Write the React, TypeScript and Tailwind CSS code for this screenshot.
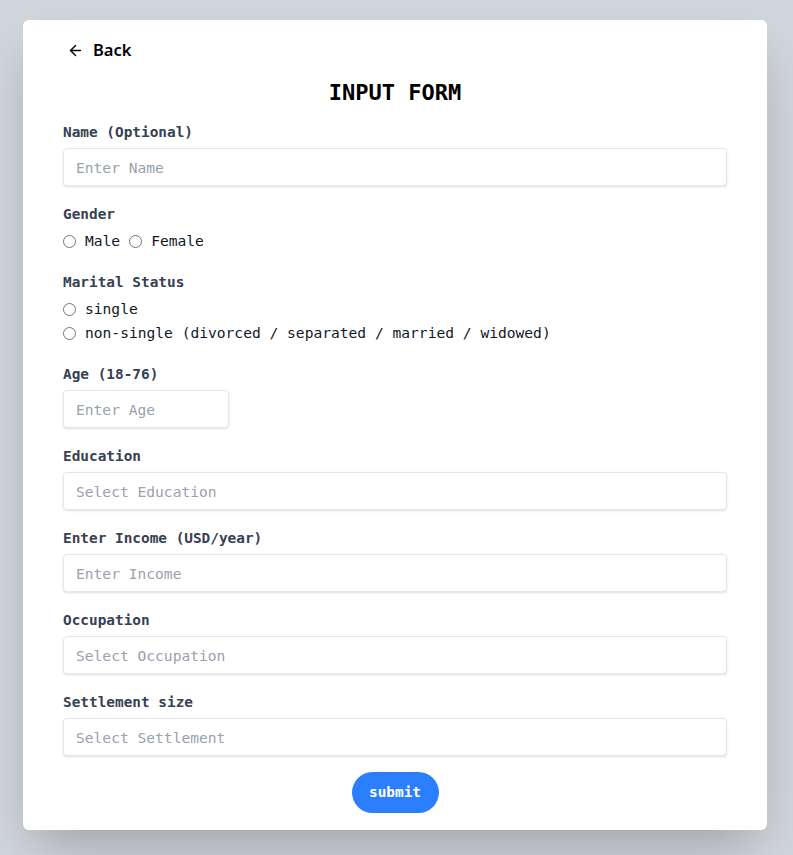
import { ArrowLeft } from 'lucide-react';

const mono = "font-['DejaVu_Sans_Mono',monospace]";

function Field({ label, placeholder, narrow }: { label: string; placeholder: string; narrow?: boolean }) {
  return (
    <div className="flex flex-col">
      <label className="mb-1.5 text-[14.4px] font-bold leading-5 text-gray-700">{label}</label>
      <input
        placeholder={placeholder}
        className={`h-[38px] rounded border border-gray-200 bg-white px-3 text-[14.6px] shadow-sm outline-none placeholder:text-gray-400 ${narrow ? 'w-[166px]' : 'w-full'}`}
      />
    </div>
  );
}

function Radio({ name, text }: { name: string; text: string }) {
  return (
    <label className="flex h-6 items-center text-[14.6px] text-gray-900">
      <input type="radio" name={name} className="m-0 mr-[9px] h-[13px] w-[13px]" />
      {text}
    </label>
  );
}

export default function App() {
  return (
    <div className={`min-h-[855px] bg-gray-300 pl-[23px] pr-[26px] pt-5 ${mono}`}>
      <div className="rounded-md bg-white px-10 pb-[17px] pt-5 shadow-2xl">
        <button className="flex h-5 items-center gap-[9px] pl-[4px] font-['Noto_Sans',sans-serif] text-[16.5px] font-semibold text-black">
          <ArrowLeft className="size-[17px]" strokeWidth={2} />
          Back
        </button>

        <h1 className="mt-[17px] text-center text-[22px] font-bold leading-8 text-black">INPUT FORM</h1>

        <div className="mt-[13px] flex flex-col gap-[18px]">
          <Field label="Name (Optional)" placeholder="Enter Name" />

          <div className="flex flex-col pb-px">
            <span className="mb-[5px] text-[14.4px] font-bold leading-5 text-gray-700">Gender</span>
            <div className="flex gap-[9px]">
              <Radio name="gender" text="Male" />
              <Radio name="gender" text="Female" />
            </div>
          </div>

          <div className="flex flex-col pb-px">
            <span className="mb-[5px] text-[14.4px] font-bold leading-5 text-gray-700">Marital Status</span>
            <Radio name="marital" text="single" />
            <Radio name="marital" text="non-single (divorced / separated / married / widowed)" />
          </div>

          <Field label="Age (18-76)" placeholder="Enter Age" narrow />
          <Field label="Education" placeholder="Select Education" />
          <Field label="Enter Income (USD/year)" placeholder="Enter Income" />
          <Field label="Occupation" placeholder="Select Occupation" />
          <Field label="Settlement size" placeholder="Select Settlement" />
        </div>

        <div className="mt-4 flex justify-center">
          <button className="h-[41px] w-[87px] rounded-full bg-blue-500 text-[14.4px] font-bold text-white">submit</button>
        </div>
      </div>
    </div>
  );
}
